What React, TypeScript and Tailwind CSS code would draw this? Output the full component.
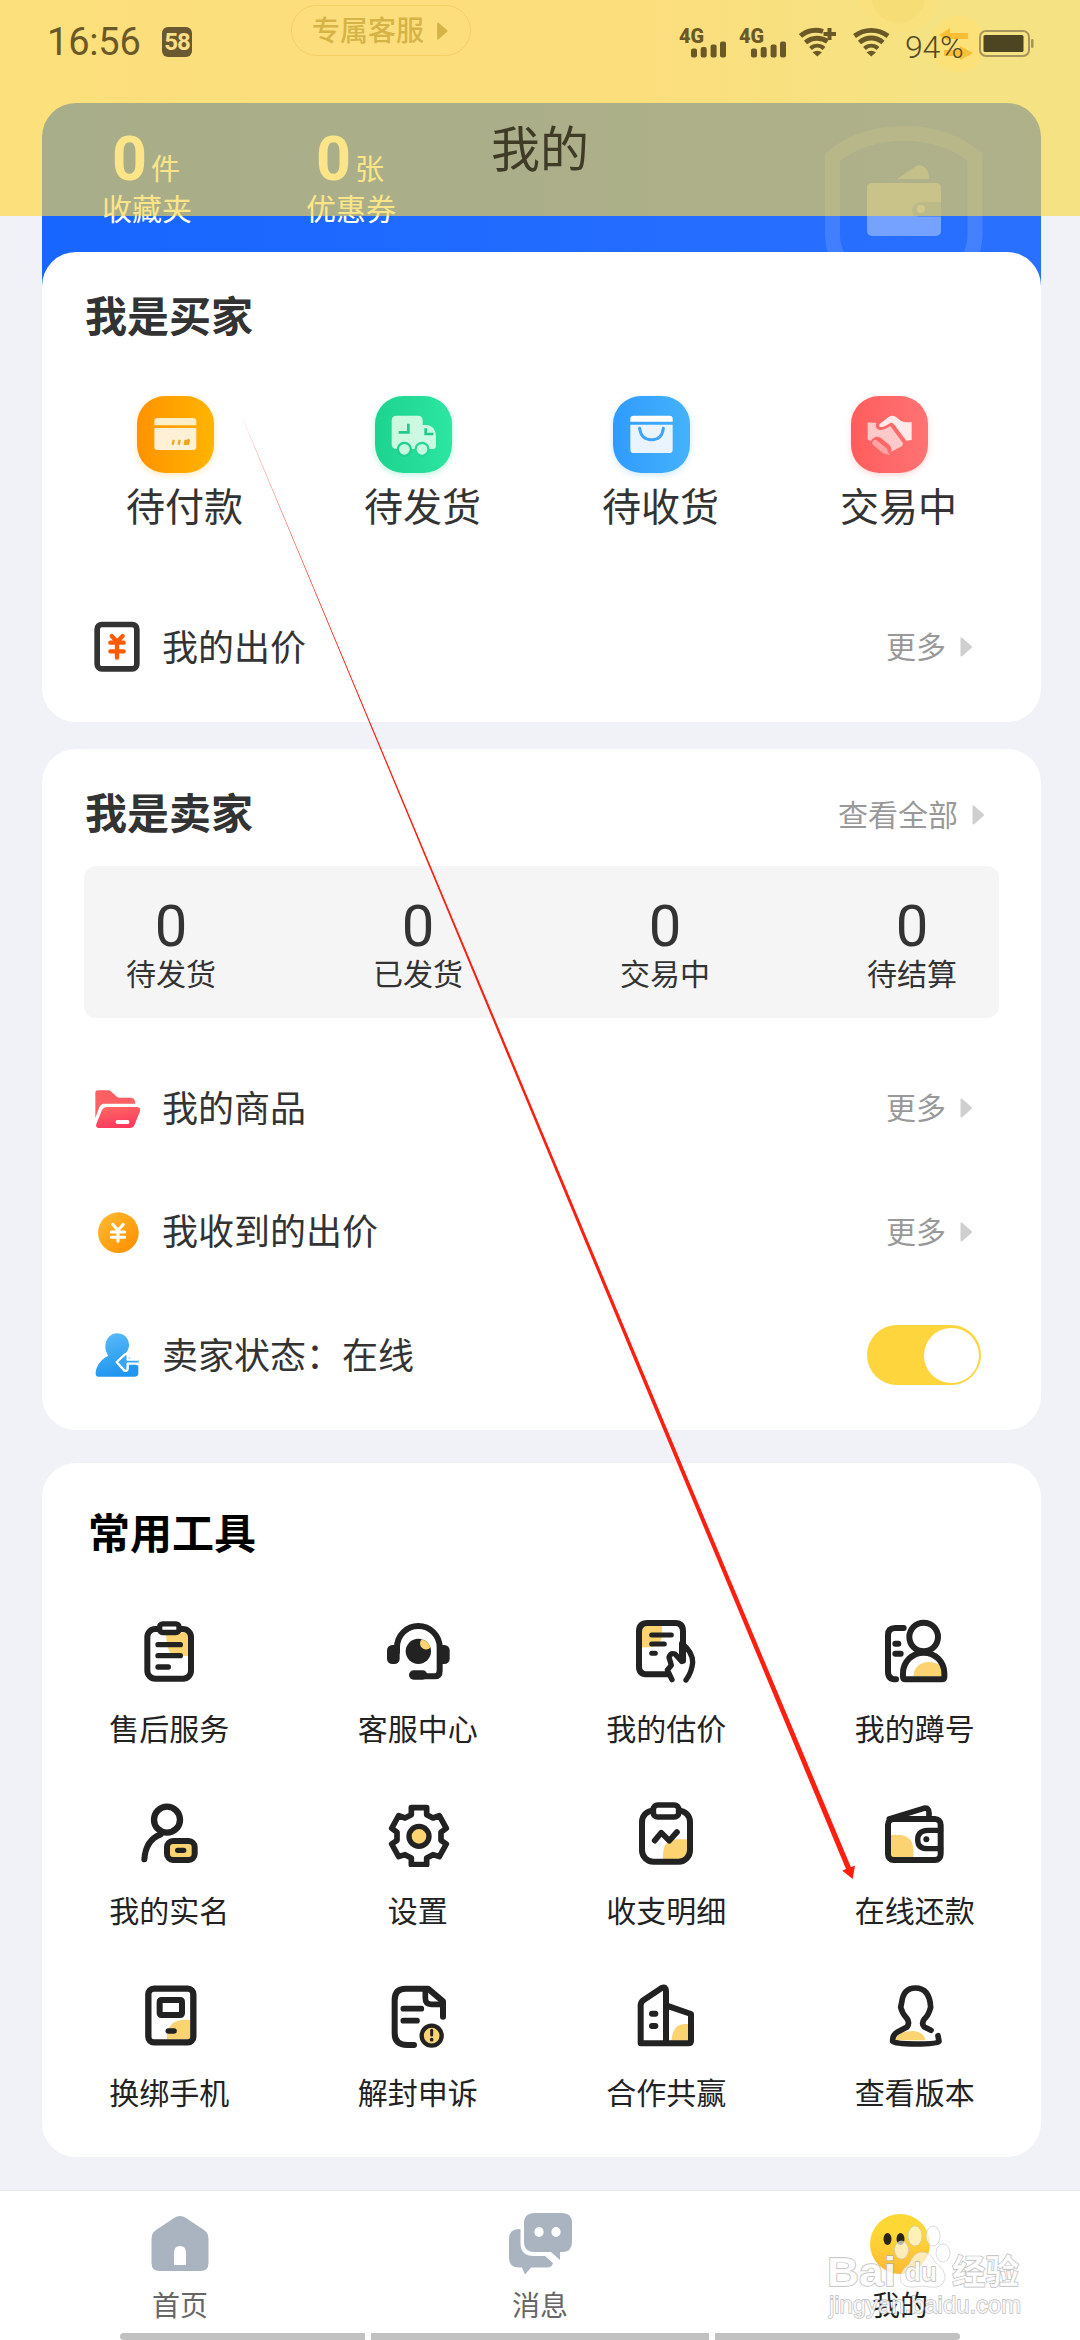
import type { ReactNode } from "react";

const INK = "#222222";
const SUN = "#fcd371";

const cjk = "font-['Noto_Sans_CJK_SC',sans-serif]";

/* ---------- status bar ---------- */

function Signal() {
  return (
    <svg className="h-[32px] w-[50px] overflow-visible" viewBox="0 0 50 32" fill="#6a5826">
      <text x="0" y="16.5" fontFamily="Roboto" fontWeight="900" fontSize="20.5" textLength="25" lengthAdjust="spacingAndGlyphs">
        4G
      </text>
      <rect x="12" y="22.5" width="6" height="9" rx="2" />
      <rect x="21.7" y="21" width="6" height="10.5" rx="2" />
      <rect x="31.6" y="18.5" width="6" height="13" rx="2" />
      <rect x="41" y="15.5" width="6" height="16" rx="2" />
    </svg>
  );
}

function Wifi({ plus = false }: { plus?: boolean }) {
  return (
    <svg className="h-[30px] w-[38px]" viewBox="0 0 38 30" fill="none" stroke="#6a5826" strokeWidth="4.8">
      <path d={plus ? "M1.5 9C8 3.2 17 2 24 4.500" : "M1.500 9C11.500 1.500 25 1.500 35 9"} />
      <path d={plus ? "M6.500 15.500C13 10 22 10 28.500 14.500" : "M6.500 15.500C13.500 9.500 23 9.500 30 15.500"} />
      <path d="M11.5 21.500C15.500 17.800 21 17.800 25 21.500" strokeWidth="4.200" />
      <path d="M13.500 25.200L18.300 29.500L23 25.200Q18.300 22.200 13.500 25.200Z" fill="#6a5826" stroke="none" />
      {plus && <path d="M30.500 1V13M24.500 7H37" strokeWidth="4" />}
    </svg>
  );
}

function StatusBar() {
  return (
    <div className="flex h-[60px] items-start pl-[47px] font-['Roboto',sans-serif] text-[#6a5826]">
      <span className="mt-[20px] w-[115px] text-[38px] leading-[44px] tracking-[-0.2px]">16:56</span>
      <span className="mt-[27px] flex h-[30px] w-[30px] items-center justify-center rounded-[6px] bg-[#6a5830] text-[24px] font-bold leading-[30px] tracking-[-1px] text-[#fbdf86]">
        58
      </span>
      <div className="ml-[487px] mt-[26px]">
        <Signal />
      </div>
      <div className="ml-[10px] mt-[26px]">
        <Signal />
      </div>
      <div className="ml-[10px] mt-[27px]">
        <Wifi plus />
      </div>
      <div className="ml-[16px] mt-[27px]">
        <Wifi />
      </div>
      <span className="ml-[14px] mt-[29px] w-[74px] text-[32px] font-light leading-[36px] tracking-[-0.3px] text-[#554a26]">94%</span>
      <svg className="mt-[30px] h-[27px] w-[55px]" viewBox="0 0 55 27">
        <rect x="1" y="1" width="49" height="25" rx="6" fill="none" stroke="#a5955d" strokeWidth="2" />
        <rect x="4.500" y="5" width="40" height="17" rx="1.500" fill="#4d4522" />
        <rect x="52" y="9" width="2.500" height="9" rx="1.200" fill="#a5955d" />
      </svg>
    </div>
  );
}

/* ---------- small shared pieces ---------- */

function Triangle({ color }: { color: string }) {
  return (
    <svg className="h-[22px] w-[13px]" viewBox="0 0 13 22">
      <path d="M1.500 2.500V19.500L11 11Z" fill={color} stroke={color} strokeWidth="2" strokeLinejoin="round" />
    </svg>
  );
}

function More() {
  return (
    <span className="flex items-center">
      <span className="-mt-[4px] text-[30px] leading-[36px] text-[#999999]">更多</span>
      <span className="ml-[14px]">
        <Triangle color="#cfcfcf" />
      </span>
    </span>
  );
}

function Row({ icon, label, children }: { icon: ReactNode; label: string; children: ReactNode }) {
  return (
    <div className="flex h-[52px] items-center pl-[50px]">
      {icon}
      <span className="-mt-[5px] ml-[18px] grow text-[36px] leading-[44px] text-[#333333]">{label}</span>
      {children}
    </div>
  );
}

/* ---------- buyer icons ---------- */

function BuyerTile({ tint, children, viewBox }: { tint: string; children: ReactNode; viewBox: string }) {
  return (
    <span className={`block h-[77px] w-[77px] rounded-[28px] ${tint}`}>
      <svg className="h-full w-full" viewBox={viewBox}>
        {children}
      </svg>
    </span>
  );
}

const buyer = [
  {
    label: "待付款",
    tint: "bg-linear-to-r from-[#ff9200] to-[#ffb400] shadow-[0_2px_6px_rgba(255,190,60,0.35)]",
    viewBox: "291 378 231 231",
    art: (
      <>
        <path d="M343 466V454Q343 444 353 444H459Q469 444 469 454V466Z" fill="#ffefc8" />
        <path d="M343 474H469V531Q469 540 459 540H353Q343 540 343 531Z" fill="#fff0d6" />
        <path d="M398 524L401 509M416 524L419 509M435 521L448 508M434 512L447 521" stroke="#f0a81e" strokeWidth="7" />
        <path d="M434 509H450L447 525H431Z" fill="#eda31c" />
      </>
    ),
  },
  {
    label: "待发货",
    tint: "bg-linear-to-r from-[#1cd390] to-[#2ce6a1] shadow-[0_2px_6px_rgba(60,225,165,0.35)]",
    viewBox: "1005 378 231 231",
    art: (
      <>
        <path d="M1055 452Q1055 437 1070 437H1134Q1148 437 1148 451V465H1160Q1188 468 1188 500V528Q1188 537 1178 537H1070Q1055 537 1055 522Z" fill="#cbfae0" />
        <path d="M1105 461V487H1076M1157 475V492H1180" fill="none" stroke="#22c98c" strokeWidth="8" />
        <circle cx="1093" cy="538" r="23" fill="#20cf90" />
        <circle cx="1093" cy="538" r="16" fill="#c5fade" />
        <circle cx="1146" cy="538" r="23" fill="#25d898" />
        <circle cx="1146" cy="538" r="16" fill="#c5fade" />
      </>
    ),
  },
  {
    label: "待收货",
    tint: "bg-linear-to-r from-[#2f9bff] to-[#45b2fb] shadow-[0_2px_6px_rgba(90,180,255,0.3)]",
    viewBox: "219 378 231 231",
    art: (
      <>
        <path d="M271 455V446Q271 437 281 437H388Q398 437 398 446V455Z" fill="#ffffff" />
        <path d="M271 464H398V539Q398 549 388 549H281Q271 549 271 539Z" fill="#e9f4ff" />
        <path d="M299 475Q303 509 335 509Q366 509 370 475" fill="none" stroke="#3fa3f8" strokeWidth="9" strokeLinecap="round" />
      </>
    ),
  },
  {
    label: "交易中",
    tint: "bg-linear-to-r from-[#ff5c5c] to-[#ff7373] shadow-[0_2px_6px_rgba(255,120,120,0.3)]",
    viewBox: "933 378 231 231",
    art: (
      <>
        <path d="M1018 463L1046 441Q1057 434 1068 441L1082 452Q1095 459 1115 456V510L1099 512L1062 463Q1056 455 1047 461Q1030 473 1018 471Z" fill="#ffe9e9" />
        <path d="M983 457L1009 459Q1002 474 1018 480Q1032 481 1051 468L1088 518Q1091 526 1081 531L1054 545Q1058 530 1040 518L1022 503Q1005 494 992 514L983 508Z" fill="#ffc9c9" />
        <path d="M1006 519L1033 541" stroke="#ffa3a3" strokeWidth="18" strokeLinecap="round" />
        <path d="M1042 546L1046 552L1038 550Z" fill="#ffa3a3" stroke="#ffa3a3" strokeWidth="4" />
      </>
    ),
  },
];

/* ---------- list row icons ---------- */

const rowSvg = "h-[52px] w-[52px] shrink-0";

const bidIcon = (
  <svg className={rowSvg} viewBox="156 1053 156 156" fill="none" strokeLinecap="round" strokeLinejoin="round">
    <rect x="171.500" y="1063.500" width="119" height="133" rx="14" stroke="#333333" strokeWidth="17" />
    <path d="M215 1098L231 1115L248 1098M211 1118H251M211 1144H251M231 1117V1163" stroke="#ff5a05" strokeWidth="13" />
  </svg>
);

const folderIcon = (
  <svg className={rowSvg} viewBox="156 96 156 156">
    <defs>
      <linearGradient id="folder" x1="0" y1="0" x2="0.300" y2="1">
        <stop offset="0" stopColor="#ff6a64" />
        <stop offset="1" stopColor="#fb3b5e" />
      </linearGradient>
    </defs>
    <path d="M166 204V129Q166 121 174 121H205Q210 121 214 125L231 140Q235 143 240 143H275Q285 145 286 161H190Q181 163 177 174Z" fill="#fd6062" />
    <path d="M169 222L185 182Q190 171 201 171H293Q303 174 300 184L283 226Q280 234 270 234H175Q166 232 169 222Z" fill="url(#folder)" />
    <rect x="227" y="210" width="41" height="12" rx="5" fill="#ffffff" />
  </svg>
);

const coinIcon = (
  <svg className={rowSvg} viewBox="156 467 156 156">
    <defs>
      <linearGradient id="coin" x1="0" y1="0" x2="1" y2="1">
        <stop offset="0.150" stopColor="#ffb52c" />
        <stop offset="0.900" stopColor="#ff9100" />
      </linearGradient>
    </defs>
    <circle cx="235" cy="547" r="61" fill="url(#coin)" />
    <path d="M218 522L234 540L250 522M214 545H254M214 561H254M234 542V573" fill="none" stroke="#ffffff" strokeWidth="9" strokeLinecap="round" />
  </svg>
);

const sellerIcon = (
  <svg className={rowSvg} viewBox="156 837 156 156">
    <defs>
      <linearGradient id="seller" x1="0" y1="0" x2="0.300" y2="1">
        <stop offset="0" stopColor="#5bbdfa" />
        <stop offset="1" stopColor="#2196ef" />
      </linearGradient>
    </defs>
    <path d="M231 850C253 850 267 866 267 886C267 896 262 905 256 910L290 946H295V970Q295 980 285 980H176Q166 980 167 968C169 945 185 927 205 917C185 888 202 850 231 850Z" fill="url(#seller)" />
    <path d="M262 918V929H295V941H262V958Z" fill="#3aa5f4" />
    <path d="M295 929H263V916Q260 910 254 914L230 936L252 961Q262 966 263 956V941H295" fill="#3aa5f4" stroke="#ffffff" strokeWidth="7" strokeLinejoin="round" />
  </svg>
);

/* ---------- tool icons ---------- */

const tools: { label: string; viewBox: string; art: ReactNode }[] = [
  {
    label: "售后服务",
    viewBox: "228 447 198 198",
    art: (
      <>
        <path d="M316 487H385V558H340Q326 545 323 530Z" fill={SUN} stroke="none" />
        <rect x="262" y="477" width="131" height="149" rx="24" />
        <rect x="299" y="461.500" width="58" height="26" rx="9" fill="#fff" strokeWidth="16" />
        <path d="M294 524H361M294 557H361M294 591H325" strokeWidth="16" />
      </>
    ),
  },
  {
    label: "客服中心",
    viewBox: "973 447 198 198",
    art: (
      <>
        <path d="M1009 545V532A64 64 0 0 1 1137 532V602Q1137 619 1122 619H1090" />
        <rect x="979" y="525" width="38" height="57" rx="16" fill={INK} stroke="none" />
        <rect x="1130" y="525" width="37" height="57" rx="16" fill={INK} stroke="none" />
        <path d="M1059 615H1086" strokeWidth="28" />
        <circle cx="1073" cy="544" r="38" fill={INK} stroke="none" />
        <path d="M1083 508A38 38 0 0 1 1109 533A18 18 0 1 1 1083 508Z" fill={SUN} stroke="none" />
      </>
    ),
  },
  {
    label: "我的估价",
    viewBox: "218 447 198 198",
    art: (
      <>
        <path d="M245 468H305V500Q300 532 262 532H245Z" fill={SUN} stroke="none" />
        <path d="M368 572V485Q368 459 345 459H262Q236 459 236 485V590Q236 613 262 613H322" />
        <path d="M274 495H333M274 522H312M274 550H285" strokeWidth="15" />
        <path d="M335 629L321 600L333 586L326 562Q330 548 344 552L364 574V520Q397 545 397 577Q395 605 377 630" strokeWidth="16" />
      </>
    ),
  },
  {
    label: "我的蹲号",
    viewBox: "963 447 198 198",
    art: (
      <>
        <path d="M1028 474H1003Q981 474 981 495V605Q981 628 1005 628" />
        <path d="M1003 521H1012M1003 551H1019" />
        <path d="M1057 619Q1060 578 1104 576Q1126 576 1141 590V619Z" fill={SUN} stroke="none" />
        <circle cx="1088" cy="501" r="43" />
        <path d="M1026 620V610A61.500 61.500 0 0 1 1150 610V620Q1150 628 1142 628H1034Q1026 628 1026 620Z" />
      </>
    ),
  },
  {
    label: "我的实名",
    viewBox: "228 63 198 198",
    art: (
      <>
        <circle cx="321" cy="119" r="39" strokeWidth="19" />
        <path d="M253 238Q257 180 302 163" />
        <rect x="321" y="183" width="83" height="57" rx="18" fill={SUN} />
        <path d="M353 211H371" strokeWidth="16" />
      </>
    ),
  },
  {
    label: "设置",
    viewBox: "973 63 198 198",
    art: (
      <>
        <path
          d="M1052 83H1098V104L1117 114L1136 107L1157 145L1141 157V181L1157 192L1136 230L1117 224L1098 234V254H1052V234L1033 224L1014 230L993 192L1009 181V157L993 145L1014 107L1033 114L1052 104Z"
          strokeWidth="17"
        />
        <circle cx="1075" cy="169" r="30" fill={SUN} strokeWidth="16" />
      </>
    ),
  },
  {
    label: "收支明细",
    viewBox: "218 63 198 198",
    art: (
      <>
        <path d="M308 237Q304 178 350 178H380V237Z" fill={SUN} stroke="none" />
        <rect x="245" y="92" width="144" height="153" rx="34" />
        <rect x="279" y="75" width="76" height="36" rx="13" fill="#fff" strokeWidth="17" />
        <path d="M283 182L303 158L327 182L350 156" strokeWidth="17" />
      </>
    ),
  },
  {
    label: "在线还款",
    viewBox: "963 63 198 198",
    art: (
      <>
        <path d="M989 165H1018Q1056 170 1057 210V232H989Z" fill={SUN} stroke="none" />
        <rect x="981" y="117" width="158" height="123" rx="17" />
        <path d="M985 117L1088 85Q1104 82 1104 98V112" strokeWidth="17" />
        <path d="M1139 151H1100Q1070 152 1070 179Q1070 206 1100 206H1139" strokeWidth="16" />
        <circle cx="1096" cy="178" r="9" fill={INK} stroke="none" />
      </>
    ),
  },
  {
    label: "换绑手机",
    viewBox: "228 609 198 198",
    art: (
      <>
        <path d="M320 778Q320 719 376 719H391V778Z" fill={SUN} stroke="none" />
        <rect x="265" y="626" width="135" height="161" rx="17" strokeWidth="19" />
        <rect x="299" y="660" width="67" height="45" rx="5" fill="#fff" />
        <path d="M325 753H342" strokeWidth="17" />
      </>
    ),
  },
  {
    label: "解封申诉",
    viewBox: "973 609 198 198",
    art: (
      <>
        <path d="M1060 795H1040Q1002 795 1002 760V660Q1002 626 1035 626H1102L1147 664V710" />
        <path d="M1094 630V655Q1094 673 1112 673H1145" strokeWidth="17" />
        <path d="M1028 686H1082M1028 722H1069" strokeWidth="17" />
        <circle cx="1113" cy="767" r="30" fill={SUN} strokeWidth="13" />
        <path d="M1113 751V765" strokeWidth="9" />
        <circle cx="1113" cy="779" r="5.500" fill={INK} stroke="none" />
      </>
    ),
  },
  {
    label: "合作共赢",
    viewBox: "218 609 198 198",
    art: (
      <>
        <path d="M333 782Q338 732 372 732H384V782Z" fill={SUN} stroke="none" />
        <path d="M241 790V676Q241 666 250 660L304 624Q317 618 317 634V788M317 676L392 702V782Q392 790 384 790H249Q241 790 241 782" />
        <path d="M275 701H285M275 738H285" />
      </>
    ),
  },
  {
    label: "查看版本",
    viewBox: "963 609 198 198",
    art: (
      <>
        <path d="M1003 781Q1008 753 1058 753Q1090 757 1093 781Z" fill={SUN} stroke="none" />
        <path
          d="M1110 751L1090 741Q1080 731 1090 717Q1102 708 1109 682Q1106 624 1063 624Q1027 624 1022 668L1019 682Q1024 701 1036 713Q1048 727 1038 741L1008 757Q994 766 995 784Q1003 792 1063 792Q1128 792 1134 784L1131 767"
          strokeWidth="17"
        />
      </>
    ),
  },
];

/* ---------- blue benefits card ---------- */

function Benefit({ unit, label }: { unit: string; label: string }) {
  return (
    <div className="flex w-[90px] flex-col text-white">
      <div className="flex h-[62px] items-end pl-[10px]">
        <span className="-mb-[5px] font-['Roboto',sans-serif] text-[61px] font-bold leading-[66px]">0</span>
        <span className="mb-[1px] ml-[4px] text-[29px] leading-[38px]">{unit}</span>
      </div>
      <span className="mt-[2px] text-[30px] leading-[36px]">{label}</span>
    </div>
  );
}

function BenefitsCard() {
  return (
    <section className="relative flex h-[189px] gap-[114px] overflow-hidden rounded-t-[34px] bg-linear-to-r from-[#1766ff] to-[#2a70ff] pl-[60px] pt-[22px]">
      <svg className="absolute left-[773px] top-[10px] h-[179px] w-[180px]" viewBox="815 113 180 179" fill="none">
        <path d="M850 275Q832.500 255 832.500 235V157Q862 133.500 904 133.500Q946 133.500 975 157V235Q975 255 958 275" stroke="#ffffff" strokeOpacity="0.120" strokeWidth="15" />
        <path d="M897 179L918 165Q929 166 929 179Z" fill="#ffffff" fillOpacity="0.300" />
        <rect x="867" y="183" width="74" height="53" rx="5" fill="#b4ccff" fillOpacity="0.550" />
        <path d="M941 202H920Q912 203 912 210Q912 217 920 217H941Z" fill="#3b7bff" fillOpacity="0.650" />
        <circle cx="921" cy="209" r="4" fill="#9fbfff" fillOpacity="0.700" />
      </svg>
      <Benefit unit="件" label="收藏夹" />
      <Benefit unit="张" label="优惠券" />
    </section>
  );
}

function PageHeader() {
  return (
    <header className="relative flex h-[103px] items-start overflow-hidden">
      <svg className="absolute left-[840px] top-0 h-[100px] w-[160px]" viewBox="840 0 160 100">
        <circle cx="898" cy="-9" r="42" fill="#fff4d8" fillOpacity="0.500" />
        <circle cx="898" cy="-4" r="27" fill="#e2d3a4" fillOpacity="0.350" />
        <circle cx="958" cy="44" r="28" fill="#fff3cc" fillOpacity="0.900" />
        <path d="M939 35L950 28V33H968V39H950V42ZM973 53L960 46V50H944V56H960V60Z" fill="#ff8a00" fillOpacity="0.900" />
      </svg>
      <div className="ml-[291px] mt-[5px] flex h-[51px] w-[180px] items-center rounded-full border border-[#e3c49b] pl-[20px] text-[#92754a]">
        <span className="-mt-[4px] text-[28px] font-medium leading-[36px]">专属客服</span>
        <span className="ml-[12px] scale-90">
          <Triangle color="#92754a" />
        </span>
      </div>
    </header>
  );
}

/* ---------- bottom navigation ---------- */

function NavItem({ label, active = false, children }: { label: string; active?: boolean; children: ReactNode }) {
  return (
    <div className="flex flex-1 flex-col items-center pt-[19px]">
      {children}
      <span className={`mt-[8px] text-[28px] leading-[36px] ${active ? "text-[#1f1f1f]" : "text-[#666666]"}`}>{label}</span>
    </div>
  );
}

function BottomNav() {
  return (
    <nav className="relative flex h-[150px] border-t border-[#e6e7ea] bg-white">
      <NavItem label="首页">
        <svg className="h-[68px] w-[68px]" viewBox="0 0 68 68" fill="#a9b4c0">
          <path d="M28 8Q34 4 40 8L58 20Q62.500 23 62.500 29V53Q62.500 61 54.500 61H13.500Q5.500 61 5.500 53V29Q5.500 23 10 20Z" />
          <path d="M28 55V43Q28 36 34 36Q40 36 40 43V55Z" fill="#fff" />
        </svg>
      </NavItem>
      <NavItem label="消息">
        <svg className="h-[68px] w-[68px]" viewBox="0 0 68 68" fill="#a9b4c0">
          <path d="M13 19H14.500V33Q14.500 46 28 46H39L47 53Q46 57.500 41 57.500H25L19 64.500L16 57.500H13Q3 57.500 3 47.500V29Q3 19 13 19Z" />
          <path d="M29 3H56Q66 3 66 13V32Q66 42 56 42H54V50L45 42H29Q18 42 18 32V13Q18 3 29 3Z" />
          <ellipse cx="33" cy="22" rx="4.600" ry="5" fill="#fff" />
          <ellipse cx="50" cy="22" rx="4.600" ry="5" fill="#fff" />
        </svg>
      </NavItem>
      <NavItem label="我的" active>
        <svg className="h-[68px] w-[68px]" viewBox="0 0 68 68">
          <defs>
            <linearGradient id="face" x1="0" y1="0" x2="0" y2="1">
              <stop offset="0.300" stopColor="#fdd835" />
              <stop offset="1" stopColor="#fdb934" />
            </linearGradient>
          </defs>
          <circle cx="34" cy="34" r="30" fill="url(#face)" />
          <ellipse cx="21.500" cy="29" rx="4" ry="6" fill="#272318" />
          <ellipse cx="34.500" cy="29" rx="4" ry="6" fill="#272318" />
        </svg>
      </NavItem>
      <div className="absolute inset-x-[120px] bottom-0 flex h-[7px] gap-[6px]">
        <span className="w-[245px] rounded-l-[4px] bg-[#c1c1c1]" />
        <span className="w-[338px] bg-[#c1c1c1]" />
        <span className="w-[245px] rounded-r-[4px] bg-[#c1c1c1]" />
      </div>
      <svg className="absolute left-[815px] top-[20px] h-[125px] w-[220px]" viewBox="815 2211 220 125">
        <g fill="#ffffff" fillOpacity="0.650" stroke="#c8c8c8" strokeOpacity="0.650" strokeWidth="1">
          <ellipse cx="915" cy="2236" rx="7" ry="10" />
          <ellipse cx="933" cy="2236" rx="7" ry="10" />
          <ellipse cx="901.500" cy="2250" rx="7" ry="9" />
          <ellipse cx="943" cy="2253" rx="7" ry="9" />
          <path d="M922 2252Q930 2252 935 2262Q946 2270 945 2279Q942 2289 930 2287Q922 2285 914 2287Q901 2288 900 2278Q900 2271 909 2264Q914 2252 922 2252Z" />
        </g>
        <g fontFamily="Liberation Sans, Noto Sans CJK SC, sans-serif" fill="#ffffff" fillOpacity="0.850" stroke="#a8a8a8" strokeOpacity="0.750" strokeWidth="1.400" paintOrder="stroke">
          <text x="827" y="2286" fontSize="41" fontWeight="bold" textLength="69" lengthAdjust="spacingAndGlyphs">
            Bai
          </text>
          <text x="905" y="2281" fontSize="26" fontWeight="bold" textLength="32" lengthAdjust="spacingAndGlyphs">
            du
          </text>
          <text x="952" y="2284" fontSize="34" fontFamily="Noto Sans CJK SC" fontWeight="bold" textLength="67" lengthAdjust="spacingAndGlyphs">
            经验
          </text>
          <text x="829" y="2313" fontSize="24" textLength="192" lengthAdjust="spacingAndGlyphs">
            jingyan.baidu.com
          </text>
        </g>
      </svg>
    </nav>
  );
}

/* ---------- page ---------- */

export default function App() {
  return (
    <div className={`relative flex h-[2340px] w-[1080px] flex-col overflow-hidden bg-[#f0f2f7] ${cjk}`}>
      <div className="flex grow flex-col bg-[linear-gradient(90deg,#fff2db,#ffebde_30%,#ffecde_60%,#ecf7ea_85%)] bg-[length:100%_216px] bg-no-repeat">
        <PageHeader />
        <main className="flex flex-col pl-[42px] pr-[39px]">
          <BenefitsCard />

          <section className="relative -mt-[40px] flex h-[470px] flex-col rounded-[34px] bg-white pt-[41px]">
            <h2 className="pl-[43px] text-[42px] font-bold leading-[42px] text-[#333333]">我是买家</h2>
            <div className="mt-[61px] flex justify-between pl-[85px] pr-[83px]">
              {buyer.map((b) => (
                <div key={b.label} className="flex w-[117px] flex-col pl-[10px]">
                  <BuyerTile tint={b.tint} viewBox={b.viewBox}>
                    {b.art}
                  </BuyerTile>
                  <span className="-ml-[11px] mt-[11px] whitespace-nowrap text-[39px] leading-[40px] text-[#333333]">{b.label}</span>
                </div>
              ))}
            </div>
            <div className="mt-[97px] pr-[68px]">
              <Row icon={bidIcon} label="我的出价">
                <More />
              </Row>
            </div>
          </section>

          <section className="mt-[27px] flex h-[681px] flex-col rounded-[34px] bg-white pt-[41px]">
            <div className="flex h-[42px] items-center justify-between pl-[43px] pr-[56px]">
              <h2 className="text-[42px] font-bold leading-[42px] text-[#333333]">我是卖家</h2>
              <span className="mt-[8px] flex items-center">
                <span className="-mt-[4px] text-[30px] leading-[36px] text-[#999999]">查看全部</span>
                <span className="ml-[14px]">
                  <Triangle color="#cfcfcf" />
                </span>
              </span>
            </div>
            <div className="ml-[42px] mr-[42px] mt-[34px] flex h-[152px] justify-between rounded-[12px] bg-[#f5f5f5] px-[42px]">
              {["待发货", "已发货", "交易中", "待结算"].map((label) => (
                <div key={label} className="flex w-[90px] flex-col items-center pt-[31px] text-[#333333]">
                  <span className="font-['Roboto',sans-serif] text-[58px] leading-[58px]">0</span>
                  <span className="-mt-px text-[30px] leading-[36px]">{label}</span>
                </div>
              ))}
            </div>
            <div className="mt-[64px] flex flex-col gap-[71.5px]">
              <div className="pr-[68px]">
                <Row icon={folderIcon} label="我的商品">
                  <More />
                </Row>
              </div>
              <div className="pr-[68px]">
                <Row icon={coinIcon} label="我收到的出价">
                  <More />
                </Row>
              </div>
              <div className="pr-[60px]">
                <Row icon={sellerIcon} label="卖家状态：在线">
                  <span className="flex h-[60px] w-[114px] items-center justify-end rounded-full bg-[#ffd53e] pr-[2px]">
                    <span className="h-[55px] w-[55px] rounded-full bg-white" />
                  </span>
                </Row>
              </div>
            </div>
          </section>

          <section className="mt-[33px] flex h-[694px] flex-col rounded-[34px] bg-white pt-[47px]">
            <h2 className="pl-[46px] text-[42px] font-bold leading-[42px] text-black">常用工具</h2>
            <div className="ml-[3px] mr-[2px] mt-[67px] grid grid-cols-4 gap-y-[55px]">
              {tools.map((t) => (
                <div key={t.label} className="flex flex-col items-center">
                  <svg
                    className="h-[66px] w-[66px]"
                    viewBox={t.viewBox}
                    fill="none"
                    stroke={INK}
                    strokeWidth="18"
                    strokeLinecap="round"
                    strokeLinejoin="round"
                  >
                    {t.art}
                  </svg>
                  <span className="-mb-px mt-[24px] pb-[2px] text-[30px] leading-[36px] text-[#222222]">{t.label}</span>
                </div>
              ))}
            </div>
          </section>
        </main>
      </div>

      <BottomNav />

      {/* translucent title bar over the scrolled page */}
      <div className="absolute inset-x-0 top-0 h-[216px] bg-[#fad646]/64">
        <StatusBar />
      </div>
      <div className="absolute inset-x-0 top-0 flex h-[216px] justify-center pt-[118px]">
        <h1 className="text-[49px] leading-[56px] text-[#3f3b27]">我的</h1>
      </div>

      {/* pointer from the orders to the repayment tool */}
      <svg className="pointer-events-none absolute left-0 top-0 h-[2340px] w-[1080px]" viewBox="0 0 1080 2340">
        <path d="M240 412L850.900 1867L855 1865.800L852.700 1879L842.300 1870.700L846 1869Z" fill="#ff1f10" />
      </svg>
    </div>
  );
}
